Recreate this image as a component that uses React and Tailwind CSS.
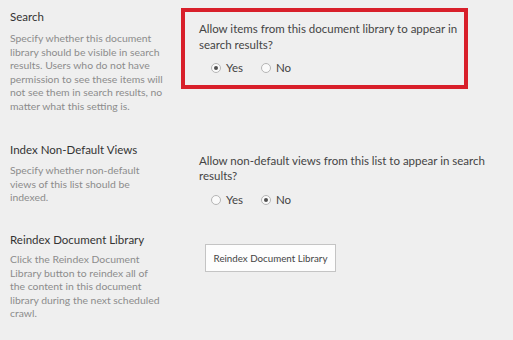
import { useState } from "react"

const font = { fontFamily: 'Lato, "Open Sans", sans-serif' }

const Radio = ({ checked, label, onClick }) => (
  <button type="button" onClick={onClick} className="flex items-center gap-[5px] h-4">
    <span className="w-[10px] h-[10px] rounded-full border border-[#b5b5b5] bg-[#fafafa] flex items-center justify-center">
      {checked && <span className="w-[4px] h-[4px] rounded-full bg-[#505050]" />}
    </span>
    <span className="text-[11.5px] leading-4 text-[#444]">{label}</span>
  </button>
)

const RadioPair = ({ value, onChange }) => (
  <div className="flex items-center gap-[18px] pl-[12px]">
    <Radio checked={value === "yes"} label="Yes" onClick={() => onChange("yes")} />
    <Radio checked={value === "no"} label="No" onClick={() => onChange("no")} />
  </div>
)

const App = () => {
  const [searchVisible, setSearchVisible] = useState("yes")
  const [indexViews, setIndexViews] = useState("no")

  return (
    <div className="w-[513px] h-[340px] bg-[#efefef] overflow-hidden" style={font}>
      {/* Search */}
      <div className="flex items-start">
        <div className="w-[181px] pl-[10px] pr-[18px] pt-[9px]">
          <h3 className="text-[11.5px] leading-4 text-[#333]">Search</h3>
          <p className="mt-[7px] text-[10.4px] leading-[13.5px] text-[#8c8c8c]">
            Specify whether this document library should be visible in search results. Users who do not have
            permission to see these items will not see them in search results, no matter what this setting is.
          </p>
        </div>
        <div className="mt-[8px] w-[287px] h-[81px] border-4 border-[#d81f2a] pl-[14px] pr-[2px] pt-[9px]">
          <p className="text-[11.5px] leading-[15.7px] text-[#444]">
            Allow items from this document library to appear in search results?
          </p>
          <div className="mt-[8px]">
            <RadioPair value={searchVisible} onChange={setSearchVisible} />
          </div>
        </div>
      </div>

      {/* Index Non-Default Views */}
      <div className="flex items-start mt-[29px]">
        <div className="w-[181px] pl-[10px] pr-[18px]">
          <h3 className="text-[11.5px] leading-4 text-[#333]">Index Non-Default Views</h3>
          <p className="mt-[6px] text-[10.4px] leading-[13.5px] text-[#8c8c8c]">
            Specify whether non-default views of this list should be indexed.
          </p>
        </div>
        <div className="pt-[11px] pl-[18px] pr-[20px] flex-1">
          <p className="text-[11.5px] leading-[15px] text-[#444]">
            Allow non-default views from this list to appear in search results?
          </p>
          <div className="mt-[9px]">
            <RadioPair value={indexViews} onChange={setIndexViews} />
          </div>
        </div>
      </div>

      {/* Reindex */}
      <div className="flex items-start mt-[24px]">
        <div className="w-[181px] pl-[10px] pr-[18px]">
          <h3 className="text-[11.5px] leading-4 text-[#333]">Reindex Document Library</h3>
          <p className="mt-[5px] text-[10.4px] leading-[13.5px] text-[#8c8c8c]">
            Click the Reindex Document Library button to reindex all of the content in this document library
            during the next scheduled crawl.
          </p>
        </div>
        <div className="pt-[12px] pl-[24px]">
          <button
            type="button"
            className="w-[131px] h-[28px] border border-[#c4c4c4] bg-[#fdfdfd] text-[9.75px] text-[#444] whitespace-nowrap"
          >
            Reindex Document Library
          </button>
        </div>
      </div>
    </div>
  )
}

export default App
